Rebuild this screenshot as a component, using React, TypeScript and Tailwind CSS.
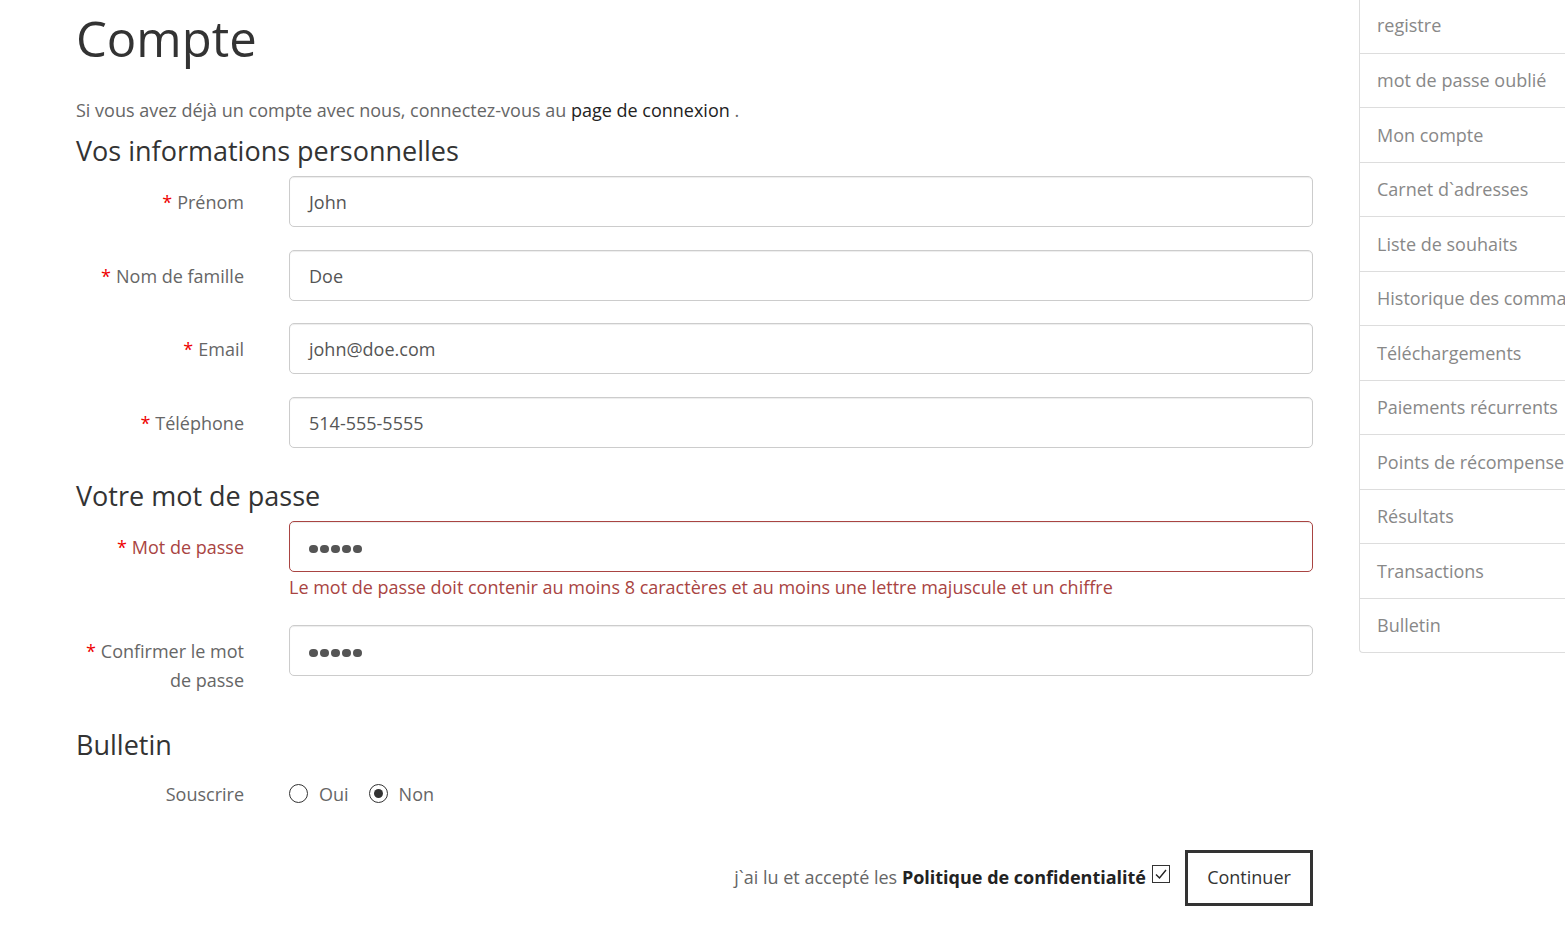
import React from 'react';

const sideLinks = [
  'registre',
  'mot de passe oublié',
  'Mon compte',
  'Carnet d`adresses',
  'Liste de souhaits',
  'Historique des commandes',
  'Téléchargements',
  'Paiements récurrents',
  'Points de récompense',
  'Résultats',
  'Transactions',
  'Bulletin',
];

const Req = () => <span className="text-[#e00] mr-[5px]">*</span>;

// masked password value, drawn as dots like the browser does
const Dots = ({ n }: { n: number }) => (
  <span className="flex gap-[2.5px] mt-[4px]" aria-label="mot de passe masqué">
    {Array.from({ length: n }).map((_, i) => (
      <span key={i} className="w-[8.5px] h-[8.5px] rounded-full bg-[#555]" />
    ))}
  </span>
);

const Field = ({
  label,
  value,
  password,
  error,
}: {
  label: React.ReactNode;
  value: string;
  password?: boolean;
  error?: boolean;
}) => (
  <div className="flex items-start">
    <label
      className={
        'w-[168px] shrink-0 text-right pt-[12px] leading-[29px] ' +
        (error ? 'text-[#a94442]' : 'text-[#666]')
      }
    >
      {label}
    </label>
    <div
      className={
        'ml-[45px] flex-1 h-[51px] flex items-center rounded-[5px] border bg-white px-[19px] pt-[2px] text-[#555] shadow-[inset_0_1px_1px_rgba(0,0,0,0.075)] ' +
        (error ? 'border-[#a94442]' : 'border-[#ccc]')
      }
    >
      {password ? <Dots n={value.length} /> : value}
    </div>
  </div>
);

const Radio = ({ checked, label }: { checked?: boolean; label: string }) => (
  <span className="flex items-center">
    <span className="w-[19px] h-[19px] rounded-full border-[1.5px] border-[#333] flex items-center justify-center">
      {checked && <span className="w-[9px] h-[9px] rounded-full bg-[#333]" />}
    </span>
    <span className="ml-[11px] text-[#666]">{label}</span>
  </span>
);

const App = () => {
  return (
    <div
      className="w-full min-h-[925px] overflow-hidden bg-white text-[18px]"
      style={{ fontFamily: '"Open Sans", "Liberation Sans", sans-serif' }}
    >
      <div className="flex pl-[76px]">
        <main className="w-[1237px] shrink-0">
          <h1 className="mt-[11px] text-[49px] leading-[55px] text-[#333]">Compte</h1>
          <p className="mt-[31px] leading-[26px] text-[#666]">
            Si vous avez déjà un compte avec nous, connectez-vous au{' '}
            <a className="text-[#222]">page de connexion</a> .
          </p>

          <h2 className="mt-[10px] text-[27px] leading-[36px] text-[#333]">
            Vos informations personnelles
          </h2>
          <div className="mt-[7px] flex flex-col gap-[22.5px]">
            <Field label={<><Req />Prénom</>} value="John" />
            <Field label={<><Req />Nom de famille</>} value="Doe" />
            <Field label={<><Req />Email</>} value="john@doe.com" />
            <Field label={<><Req />Téléphone</>} value="514-555-5555" />
          </div>

          <h2 className="mt-[30px] text-[27px] leading-[36px] text-[#333]">Votre mot de passe</h2>
          <div className="mt-[7px]">
            <Field label={<><Req />Mot de passe</>} value="12345" password error />
            <div className="ml-[213px] mt-[2px] leading-[26px] text-[#a94442]">
              Le mot de passe doit contenir au moins 8 caractères et au moins une lettre majuscule et un chiffre
            </div>
          </div>
          <div className="mt-[25px]">
            <Field label={<><Req />Confirmer le mot de passe</>} value="12345" password />
          </div>

          <h2 className="mt-[32px] text-[27px] leading-[36px] text-[#333]">Bulletin</h2>
          <div className="mt-[18px] flex items-center leading-[26px]">
            <span className="w-[168px] text-right text-[#666]">Souscrire</span>
            <div className="ml-[45px] flex items-center gap-[20px]">
              <Radio label="Oui" />
              <Radio label="Non" checked />
            </div>
          </div>

          <div className="mt-[43px] flex items-center justify-end">
            <span className="text-[#666]">
              j`ai lu et accepté les{' '}
              <b className="font-bold text-[#222]">Politique de confidentialité</b>
            </span>
            <span className="ml-[6px] -mt-[8px] w-[18px] h-[18px] border border-[#333] flex items-center justify-center bg-white">
              <svg width="14" height="14" viewBox="0 0 14 14" fill="none">
                <path d="M2 7.5 L5.5 11 L12 3" stroke="#222" strokeWidth="1.4" />
              </svg>
            </span>
            <button className="ml-[15px] w-[128px] h-[56px] border-[3px] border-[#333] bg-white text-[18px] text-[#333]">
              Continuer
            </button>
          </div>
        </main>

        <aside className="ml-[46px] w-[260px] shrink-0 -mt-[2px]">
          <div className="border-l border-b border-[#ddd] rounded-bl-[4px]">
            {sideLinks.map((l, i) => (
              <div
                key={i}
                className={
                  'h-[54.5px] flex items-center pl-[17px] pt-[1px] whitespace-nowrap text-[#888] ' +
                  (i > 0 ? 'border-t border-[#ddd]' : '')
                }
              >
                {l}
              </div>
            ))}
          </div>
        </aside>
      </div>
    </div>
  );
};

export default App;
